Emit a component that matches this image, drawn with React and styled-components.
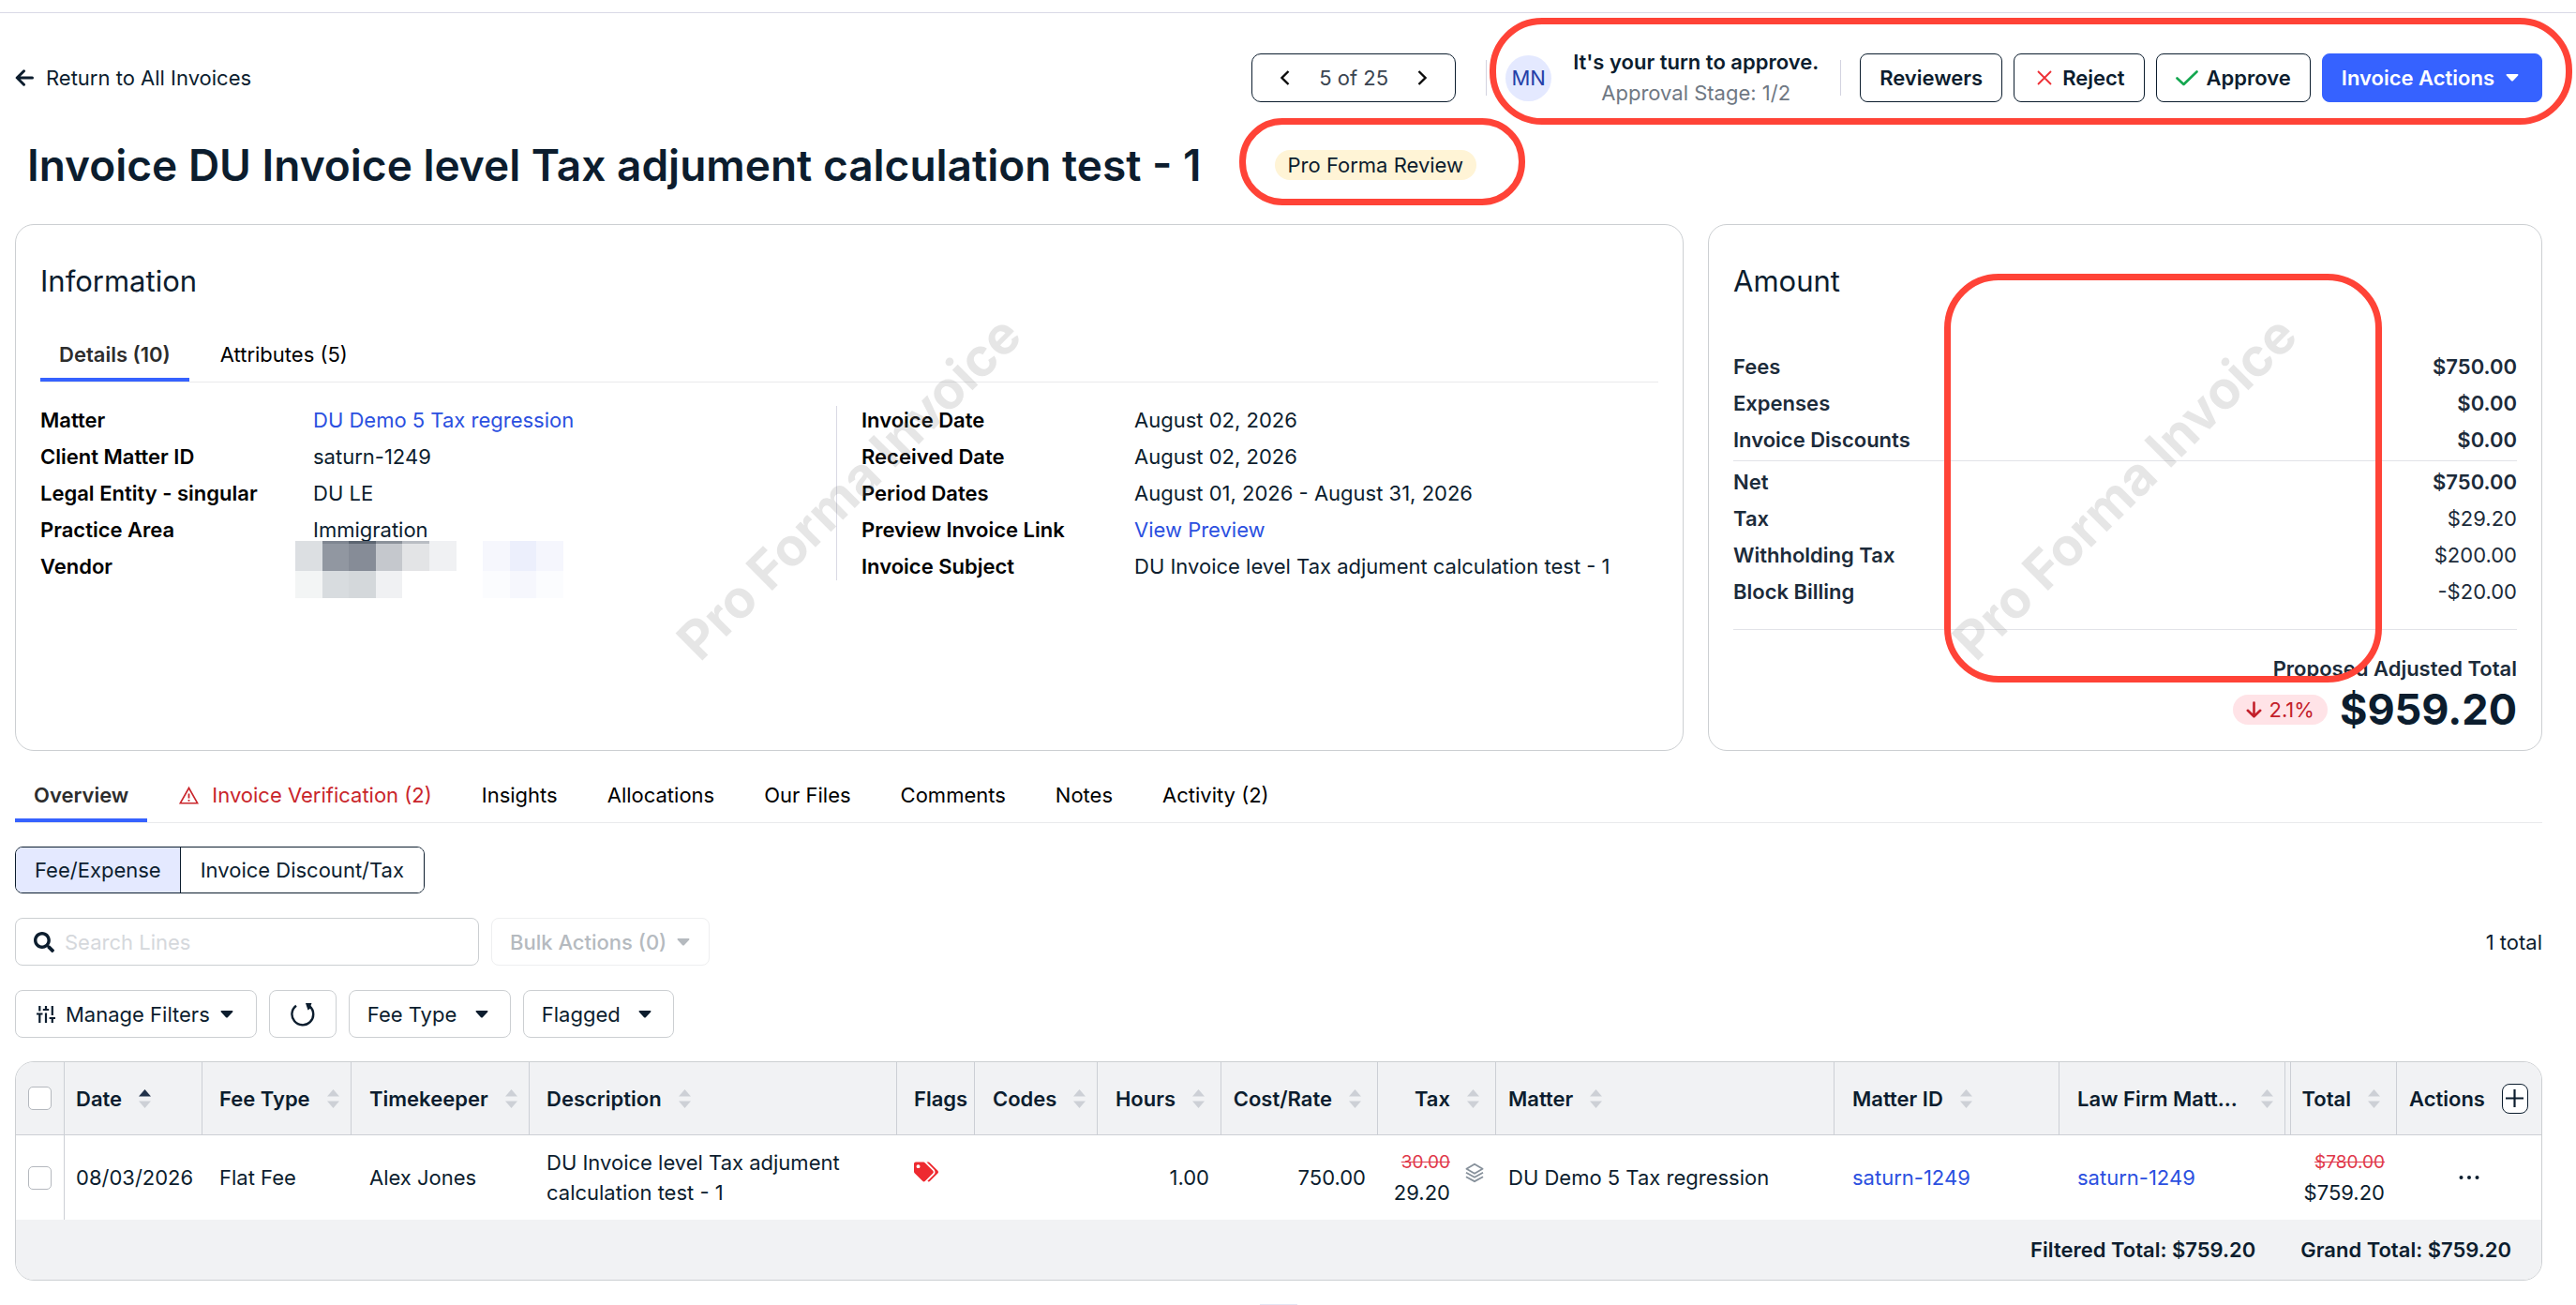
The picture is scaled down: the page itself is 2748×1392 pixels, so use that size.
import React from 'react';
import styled, { createGlobalStyle } from 'styled-components';
import { FaSearch, FaTags } from 'react-icons/fa';

const GlobalStyle = createGlobalStyle`
  *, *::before, *::after {
    box-sizing: border-box;
  }
  body {
    margin: 0;
    background: #fff;
    color: #0c1d2e;
    font-family: Inter, 'Liberation Sans', sans-serif;
    font-size: 22px;
    line-height: 30px;
  }
  button, input, select {
    font: inherit;
    color: inherit;
  }
  a {
    color: #2b50e0;
    text-decoration: none;
  }
  svg {
    display: block;
    flex: none;
  }
`;

const TopStrip = styled('div')`
  height: 14px;
  border-bottom: solid 1px #dadae6;
`;

const Page = styled('main')`
  padding: 0 36px 0 16px;
`;

const Toolbar = styled('header')`
  display: flex;
  justify-content: space-between;
  align-items: center;
  margin-top: 36px;
`;

const ToolbarGroup = styled('div')`
  position: relative;
  display: flex;
  align-items: center;
  gap: ${(props) => props.$gap}px;
`;

const BackLink = styled('a')`
  display: flex;
  align-items: center;
  gap: 13px;
  color: #0c1d2e;
`;

const Pager = styled('nav')`
  display: flex;
  justify-content: space-between;
  align-items: center;
  width: 218px;
  height: 52px;
  padding: 0 24px;
  border: solid 1px #0c1d2e;
  border-radius: 10px;
  color: #3a4450;
`;

const IconButton = styled('button')`
  display: block;
  padding: 6px;
  border: 0;
  background: none;
  cursor: pointer;
`;

const Separator = styled('div')`
  width: 1px;
  height: 38px;
  background: #d3d3e0;
`;

const Avatar = styled('div')`
  display: flex;
  justify-content: center;
  align-items: center;
  width: 49px;
  height: 49px;
  border-radius: 50%;
  background: #e4e9ff;
  color: #2540a8;
`;

const Turn = styled('div')`
  min-width: 268px;
  line-height: 33px;
  text-align: center;
  color: #6f7883;
`;

const Strong = styled('strong')`
  font-weight: 600;
  color: #0c1d2e;
`;

const Button = styled('button')`
  display: flex;
  align-items: center;
  gap: 9px;
  height: 52px;
  padding: 0 20px;
  border: solid 1px ${(props) => (props.$primary ? '#3662ff' : '#0c1d2e')};
  border-radius: 8px;
  background: ${(props) => (props.$primary ? '#3662ff' : '#fff')};
  color: ${(props) => (props.$primary ? '#fff' : '#0c1d2e')};
  font-weight: 600;
  cursor: pointer;

  ${(props) => props.$primary && 'gap: 12px; padding-right: 24px;'}
`;

const Annotation = styled('div')`
  position: absolute;
  inset: ${(props) => props.$inset};
  border: solid 7px #ff4337;
  border-radius: ${(props) => props.$radius}px;
  pointer-events: none;
`;

const TitleRow = styled('div')`
  display: flex;
  align-items: center;
  gap: 78px;
  margin-top: 30px;
  padding-left: 13px;
`;

const Title = styled('h1')`
  margin: 0;
  font-size: 46px;
  font-weight: 600;
  line-height: 60px;
`;

const StatusWrapper = styled('div')`
  position: relative;
`;

const Status = styled('div')`
  height: 32px;
  padding: 0 14px;
  border-radius: 16px;
  background: #fff4d6;
  line-height: 32px;
`;

const CardRow = styled('div')`
  display: grid;
  grid-template-columns: 2fr 1fr;
  gap: 26px;
  margin-top: 33px;
`;

const Card = styled('section')`
  position: relative;
  padding: 40px 26px 17px;
  border: solid 1px #cccfd2;
  border-radius: 20px;
`;

const CardTitle = styled('h2')`
  margin: 0;
  font-size: 31px;
  font-weight: 400;
  line-height: 40px;
`;

const Watermark = styled('div')`
  position: absolute;
  inset: 0;
  display: flex;
  justify-content: center;
  align-items: center;
  color: rgba(128, 128, 128, 0.2);
  font-size: 56px;
  font-weight: 700;
  white-space: nowrap;
  pointer-events: none;

  span {
    transform: rotate(-45deg);
  }
`;

const Tabs = styled('div')`
  display: flex;
  gap: 13px;
  margin-top: ${(props) => props.$top}px;
  border-bottom: solid 1px #e9eaec;
`;

const Tab = styled('button')`
  display: flex;
  align-items: center;
  gap: 14px;
  padding: 10px 20px;
  border: 0;
  border-bottom: solid 4px ${(props) => (props.$active ? '#3662ff' : 'transparent')};
  background: none;
  color: ${(props) =>
    props.$alert ? '#c9252b' : props.$active ? '#2d2d2d' : '#000'};
  font-weight: ${(props) => (props.$active ? 600 : 400)};
  line-height: 30px;
  cursor: pointer;
`;

const FieldColumns = styled('div')`
  display: grid;
  grid-template-columns: 1fr 1fr;
  margin-top: 25px;
`;

const FieldList = styled('dl')`
  display: grid;
  grid-template-columns: 291px 1fr;
  align-content: start;
  row-gap: 9px;
  margin: 0;
  padding-left: ${(props) => (props.$divided ? '26px' : 0)};
  border-left: ${(props) => (props.$divided ? 'solid 1px #d9d9e4' : 0)};
  ${(props) => props.$divided && 'margin-left: -14px;'}

  dt {
    font-weight: 600;
    color: #000;
  }
  dd {
    position: relative;
    margin: 0;
  }
`;

const Redacted = styled('svg')`
  position: absolute;
  top: -12px;
  left: -19px;
`;

const AmountList = styled('dl')`
  display: grid;
  row-gap: 9px;
  margin: 0;
  padding: ${(props) => props.$padding};
  border-bottom: solid 1px #e2e3e8;
`;

const AmountRow = styled('div')`
  display: flex;
  justify-content: space-between;
  color: #1c2b3a;

  dt {
    font-weight: 600;
  }
  dd {
    margin: 0;
    font-weight: ${(props) => (props.$bold ? 600 : 400)};
  }
`;

const TotalLabel = styled('div')`
  margin-top: 26px;
  font-weight: 600;
  color: #1c2b3a;
  text-align: right;
`;

const TotalRow = styled('div')`
  display: flex;
  justify-content: flex-end;
  align-items: center;
  gap: 13px;
  margin-top: 3px;
`;

const Total = styled('div')`
  font-size: 45px;
  font-weight: 700;
  line-height: 52px;
`;

const Delta = styled('div')`
  display: flex;
  align-items: center;
  gap: 8px;
  height: 32px;
  padding: 0 14px;
  border-radius: 16px;
  background: #ffe3e7;
  color: #c3202b;
`;

const Segmented = styled('div')`
  display: flex;
  width: fit-content;
  margin-top: 25px;
  border: solid 1px #0c1d2e;
  border-radius: 8px;
  overflow: hidden;
`;

const Segment = styled('button')`
  height: 48px;
  padding: 0 20px;
  border: 0;
  background: ${(props) => (props.$active ? '#e4e9ff' : '#fff')};
  cursor: pointer;

  & + & {
    padding: 0 21px;
    border-left: solid 1px #0c1d2e;
  }
`;

const FilterRow = styled('div')`
  display: flex;
  align-items: center;
  gap: 13px;
  margin-top: 26px;
`;

const SearchBox = styled('label')`
  display: flex;
  align-items: center;
  gap: 11px;
  width: 495px;
  height: 51px;
  padding: 0 19px;
  border: solid 1px #cccfd2;
  border-radius: 8px;

  input {
    flex: 1;
    min-width: 0;
    padding: 0;
    border: 0;
    outline: 0;
    background: none;
  }
  input::placeholder {
    color: #d5d8dc;
    opacity: 1;
  }
`;

const FilterButton = styled('button')`
  display: flex;
  align-items: center;
  gap: 11px;
  height: 51px;
  padding: 0 24px 0 22px;
  border: solid 1px #cccfd2;
  border-radius: 8px;
  background: #fff;
  cursor: pointer;

  &:disabled {
    padding: 0 20px 0 19px;
    border-color: #eeeff0;
    color: #b5babf;
    font-weight: 500;
    cursor: default;
  }
`;

const ResetButton = styled(FilterButton)`
  padding: 0 22px;
`;

const SelectWrapper = styled('div')`
  position: relative;
  display: flex;

  select {
    appearance: none;
    height: 51px;
    padding: 0 56px 0 19px;
    border: solid 1px #cccfd2;
    border-radius: 8px;
    background: #fff;
  }
  svg {
    position: absolute;
    top: 22px;
    right: 24px;
    pointer-events: none;
  }
`;

const Count = styled('div')`
  margin-left: auto;
`;

const TableWrapper = styled('div')`
  margin-top: 25px;
  border: solid 1px #cccfd2;
  border-radius: 20px;
  overflow: hidden;
`;

const Table = styled('table')`
  width: 100%;
  table-layout: fixed;
  border-collapse: separate;
  border-spacing: 0;
  line-height: 32px;
`;

const HeadCell = styled('th')`
  height: 78px;
  padding: 0 ${(props) => (props.$right ? 17 : 10)}px 0 ${(props) => props.$pad}px;
  border-right: solid 1px #cccfd5;
  border-bottom: solid 1px #cccfd5;
  background: #f1f2f4;
  font-weight: 600;
  text-align: left;
  white-space: nowrap;
  ${(props) =>
    props.$double &&
    'padding-right: 18px; box-shadow: inset -5px 0 #f1f2f4, inset -6px 0 #cccfd5;'}

  &:last-child {
    padding-right: 14px;
    border-right: 0;
  }
`;

const HeadLabel = styled('div')`
  display: flex;
  align-items: center;
  justify-content: ${(props) => props.$justify || 'flex-start'};
  gap: 18px;
`;

const Cell = styled('td')`
  height: 90px;
  padding: 0 ${(props) => (props.$right ? 13 : 0)}px 0 ${(props) => props.$pad}px;
  text-align: ${(props) => (props.$right ? 'right' : 'left')};

  &:first-child {
    border-right: solid 1px #cccfd5;
  }
`;

const Flag = styled('div')`
  padding-bottom: 12px;
`;

const TaxCell = styled('div')`
  display: flex;
  justify-content: flex-end;
  align-items: center;
  gap: 16px;
  height: 64px;

  svg {
    margin-bottom: 10px;
  }
`;

const Old = styled('del')`
  display: block;
  font-size: 19px;
  color: #e0384a;
`;

const Checkbox = styled('input')`
  appearance: none;
  display: block;
  width: 25px;
  height: 25px;
  margin: 0 0 0 13px;
  border: solid 1px #b4b8be;
  border-radius: 5px;
  background: #fff;
`;

const AddColumn = styled('button')`
  display: flex;
  justify-content: center;
  align-items: center;
  width: 32px;
  height: 32px;
  padding: 0;
  border: solid 1px #0c1d2e;
  border-radius: 8px;
  background: #fff;
`;

const TotalsBar = styled('div')`
  display: flex;
  justify-content: flex-end;
  align-items: center;
  gap: 48px;
  height: 64px;
  padding-right: 32px;
  background: #f1f2f4;
  font-weight: 600;
`;

const Handle = styled('div')`
  width: 40px;
  height: 1px;
  margin: 25px auto 0;
  background: #e4e6f4;
`;

const BackIcon = () => (
  <svg width="20" height="18" viewBox="0 0 20 18" fill="none" stroke="currentColor" strokeWidth="3">
    <path d="M9.5 1.800L2.200 9l7.300 7.200M2.500 9h16" strokeLinecap="round" strokeLinejoin="round" />
  </svg>
);

const DownIcon = () => (
  <svg width="17" height="18" viewBox="0 0 17 18" fill="none" stroke="currentColor" strokeWidth="2.600">
    <path d="M8.5 1.500V16M1.800 9.800l6.700 6.500 6.700-6.500" strokeLinecap="round" strokeLinejoin="round" />
  </svg>
);

const Caret = () => (
  <svg width="14" height="8" viewBox="0 0 14 8" fill="currentColor">
    <path d="M1.400 0h11.200c.8 0 1.200.9.6 1.500L7.800 7.200c-.5.500-1.200.500-1.700 0L.8 1.500C.2.9.6 0 1.400 0z" />
  </svg>
);

const Chevron = ({ right }) => (
  <svg width="10" height="16" viewBox="0 0 10 16" fill="none" stroke="#0b0b0b" strokeWidth="2.400">
    <path d={right ? 'M1.500 1l7 7-7 7' : 'M8.500 1l-7 7 7 7'} />
  </svg>
);

const CrossIcon = () => (
  <svg width="22" height="16" viewBox="-4 0 22 16" stroke="#ee2f35" strokeWidth="1.800">
    <path d="M1 1l14 14M15 1L1 15" />
  </svg>
);

const CheckIcon = () => (
  <svg width="24" height="17" viewBox="0 0 24 17" fill="none" stroke="#14a750" strokeWidth="2.600">
    <path d="M1.500 8.500l7 6.500L22.500 1.500" strokeLinecap="round" strokeLinejoin="round" />
  </svg>
);

const AlertIcon = () => (
  <svg width="22" height="20" viewBox="0 0 22 20" fill="none" stroke="currentColor" strokeWidth="1.600">
    <path d="M11.500 2.500L20.700 18.800H2.300z" />
    <path d="M11.500 8.500v5M11.500 15v1.800" strokeWidth="1.800" />
  </svg>
);

const SlidersIcon = () => (
  <svg width="20" height="18" viewBox="0 0 20 18" fill="none" stroke="currentColor" strokeWidth="2.200">
    <path d="M3.300 0v5.500M0 8.500h6.500M3.300 8.500V18" />
    <path d="M10 0v4M6.800 4h6.400M10 7.500V18" />
    <path d="M16.800 0v10M13.600 13H20M16.800 13v5" />
  </svg>
);

const ResetIcon = () => (
  <svg width="26" height="26" viewBox="0 0 26 26" fill="none">
    <path d="M6 3.800A11.400 11.400 0 1 0 20.500 4.500" stroke="currentColor" strokeWidth="2.400" />
    <path d="M16 1h6.500l-1 2.500.5 2.500-3.500 2.500z" fill="currentColor" />
  </svg>
);

const LayersIcon = () => (
  <svg width="20" height="22" viewBox="0 0 21 22" fill="none" stroke="#87919b" strokeWidth="1.900">
    <path d="M10.500 1.200l9 5.300-9 5.300-9-5.300z" strokeLinejoin="round" />
    <path d="M1 10.800l9.500 5.200 9.500-5.200M1 15.400l9.500 5.200 9.500-5.200" />
  </svg>
);

const SortIcon = ({ active }) => (
  <svg width="13" height="20" viewBox="0 0 13 20" fill="#cdd0d6">
    <path d="M6.500 0L13 7.500H0z" fill={active ? '#22324a' : '#cdd0d6'} />
    <path d="M6.500 20L0 12.500h13z" />
  </svg>
);

const PlusIcon = () => (
  <svg width="19" height="19" viewBox="0 0 19 19" stroke="#0c1d2e" strokeWidth="2.200">
    <path d="M9.500 0v19M0 9.500h19" />
  </svg>
);

const DotsIcon = () => (
  <svg width="22" height="6" viewBox="0 0 22 6" fill="#0c1d2e">
    <circle cx="2.500" cy="3" r="2" />
    <circle cx="11" cy="3" r="2" />
    <circle cx="19.500" cy="3" r="2" />
  </svg>
);

const pixels = [
  ['#dcdfe2', '#9197a1', '#868c97', '#c5c8cd', '#e3e4e6', '#f0f1f3', null, '#f6f7fd', '#eceffc', '#f5f6fd'],
  ['#f3f5f5', '#d8dcdf', '#d4d8db', '#f0f1f3', null, null, null, '#fbfcfe', '#f6f7fd', '#fbfcfe'],
];

const RedactedName = () => (
  <Redacted width="287" height="61" viewBox="0 0 287 61" aria-label="Hidden vendor">
    {pixels.map((line, row) =>
      line.map((fill, i) => {
        const x = Math.round(i * 28.6);
        const width = Math.round((i + 1) * 28.6) - x;
        return (
          fill && (
            <rect key={i} x={x} y={row * 32} width={width} height={row ? 29 : 32} fill={fill} />
          )
        );
      })
    )}
    <path d="M29 0h28v3H29z" fill="#7f8691" />
    <path d="M57 0h29v3H57z" fill="#5c6571" />
    <path d="M86 0h28v3H86z" fill="#8c929b" />
    <path d="M114 0h29v3h-29z" fill="#b9bdc3" />
  </Redacted>
);

const leftFields = [
  ['Matter', <a href="#matter">DU Demo 5 Tax regression</a>],
  ['Client Matter ID', 'saturn-1249'],
  ['Legal Entity - singular', 'DU LE'],
  ['Practice Area', 'Immigration'],
  ['Vendor', <RedactedName />],
];

const rightFields = [
  ['Invoice Date', 'August 02, 2026'],
  ['Received Date', 'August 02, 2026'],
  ['Period Dates', 'August 01, 2026 - August 31, 2026'],
  ['Preview Invoice Link', <a href="#preview">View Preview</a>],
  ['Invoice Subject', 'DU Invoice level Tax adjument calculation test - 1'],
];

const grossAmounts = [
  ['Fees', '$750.00', true],
  ['Expenses', '$0.00', true],
  ['Invoice Discounts', '$0.00', true],
];

const netAmounts = [
  ['Net', '$750.00', true],
  ['Tax', '$29.20'],
  ['Withholding Tax', '$200.00'],
  ['Block Billing', '-$20.00'],
];

const pageTabs = [
  'Insights',
  'Allocations',
  'Our Files',
  'Comments',
  'Notes',
  'Activity (2)',
];

// matter takes whatever width the other columns leave
const columns = [
  { label: 'Date', width: 147, pad: 12, active: true },
  { label: 'Fee Type', width: 159, pad: 18 },
  { label: 'Timekeeper', width: 190, pad: 19 },
  { label: 'Description', width: 392, pad: 18 },
  { label: 'Flags', width: 83, pad: 18, plain: true },
  { label: 'Codes', width: 131, pad: 19 },
  { label: 'Hours', width: 132, pad: 12, right: true, justify: 'flex-end' },
  { label: 'Cost/Rate', width: 167, pad: 12, right: true, justify: 'flex-end' },
  { label: 'Tax', width: 126, pad: 12, right: true, justify: 'flex-end' },
  { label: 'Matter', pad: 13 },
  { label: 'Matter ID', width: 240, pad: 19 },
  { label: 'Law Firm Matt...', width: 247, pad: 19, double: true, justify: 'space-between' },
  { label: 'Total', width: 113, pad: 12, right: true, justify: 'flex-end' },
];

const Fields = ({ items, divided }) => (
  <FieldList $divided={divided}>
    {items.map(([label, value]) => (
      <React.Fragment key={label}>
        <dt>{label}</dt>
        <dd>{value}</dd>
      </React.Fragment>
    ))}
  </FieldList>
);

const Amounts = ({ items, padding }) => (
  <AmountList $padding={padding}>
    {items.map(([label, value, bold]) => (
      <AmountRow key={label} $bold={bold}>
        <dt>{label}</dt>
        <dd>{value}</dd>
      </AmountRow>
    ))}
  </AmountList>
);

const InvoiceHeader = () => (
  <>
    <Toolbar>
      <BackLink href="#invoices">
        <BackIcon />
        Return to All Invoices
      </BackLink>
      <ToolbarGroup $gap={32}>
        <Pager aria-label="Invoices">
          <IconButton aria-label="Previous">
            <Chevron />
          </IconButton>
          5 of 25
          <IconButton aria-label="Next">
            <Chevron right />
          </IconButton>
        </Pager>
        <ToolbarGroup $gap={20}>
          <Separator />
          <ToolbarGroup $gap={20}>
            <Avatar>MN</Avatar>
            <Turn>
              <Strong>It's your turn to approve.</Strong>
              <br />
              Approval Stage: 1/2
            </Turn>
            <Separator />
            <ToolbarGroup $gap={12}>
              <Button>Reviewers</Button>
              <Button>
                <CrossIcon />
                Reject
              </Button>
              <Button>
                <CheckIcon />
                Approve
              </Button>
              <Button $primary>
                Invoice Actions
                <Caret />
              </Button>
            </ToolbarGroup>
            <Annotation $inset="-31px -32px -17px -17px" $radius={56} />
          </ToolbarGroup>
        </ToolbarGroup>
      </ToolbarGroup>
    </Toolbar>
    <TitleRow>
      <Title>Invoice DU Invoice level Tax adjument calculation test - 1</Title>
      <StatusWrapper>
        <Status>Pro Forma Review</Status>
        <Annotation $inset="-34px -52px -27px -38px" $radius={46} />
      </StatusWrapper>
    </TitleRow>
  </>
);

const Lines = () => (
  <TableWrapper>
    <Table>
      <colgroup>
        <col width="52" />
        {columns.map((c) => (
          <col key={c.label} width={c.width} />
        ))}
        <col width="154" />
      </colgroup>
      <thead>
        <tr>
          <HeadCell $pad={0}>
            <Checkbox type="checkbox" aria-label="Select all lines" />
          </HeadCell>
          {columns.map((c) => (
            <HeadCell key={c.label} $pad={c.pad} $right={c.right} $double={c.double}>
              <HeadLabel $justify={c.justify}>
                {c.label}
                {!c.plain && <SortIcon active={c.active} />}
              </HeadLabel>
            </HeadCell>
          ))}
          <HeadCell $pad={13}>
            <HeadLabel $justify="space-between">
              Actions
              <AddColumn aria-label="Add column">
                <PlusIcon />
              </AddColumn>
            </HeadLabel>
          </HeadCell>
        </tr>
      </thead>
      <tbody>
        <tr>
          <Cell $pad={0}>
            <Checkbox type="checkbox" aria-label="Select line" />
          </Cell>
          <Cell $pad={12}>08/03/2026</Cell>
          <Cell $pad={18}>Flat Fee</Cell>
          <Cell $pad={19}>Alex Jones</Cell>
          <Cell $pad={18}>
            DU Invoice level Tax adjument
            <br />
            calculation test - 1
          </Cell>
          <Cell $pad={18}>
            <Flag>
              <FaTags size={26} color="#ee2a30" />
            </Flag>
          </Cell>
          <Cell $pad={19} />
          <Cell $pad={0} $right>
            1.00
          </Cell>
          <Cell $pad={0} $right>
            750.00
          </Cell>
          <Cell $pad={0} $right>
            <TaxCell>
              <div>
                <Old>30.00</Old>
                29.20
              </div>
              <LayersIcon />
            </TaxCell>
          </Cell>
          <Cell $pad={13}>DU Demo 5 Tax regression</Cell>
          <Cell $pad={19}>
            <a href="#matter">saturn-1249</a>
          </Cell>
          <Cell $pad={19}>
            <a href="#matter">saturn-1249</a>
          </Cell>
          <Cell $pad={0} $right>
            <Old>$780.00</Old>
            $759.20
          </Cell>
          <Cell $pad={60}>
            <IconButton aria-label="Line actions">
              <DotsIcon />
            </IconButton>
          </Cell>
        </tr>
      </tbody>
    </Table>
    <TotalsBar>
      <span>Filtered Total: $759.20</span>
      <span>Grand Total: $759.20</span>
    </TotalsBar>
  </TableWrapper>
);

const App = () => (
  <>
    <GlobalStyle />
    <TopStrip />
    <Page>
      <InvoiceHeader />
      <CardRow>
        <Card>
          <CardTitle>Information</CardTitle>
          <Tabs $top={33}>
            <Tab $active>Details (10)</Tab>
            <Tab>Attributes (5)</Tab>
          </Tabs>
          <FieldColumns>
            <Fields items={leftFields} />
            <Fields items={rightFields} divided />
          </FieldColumns>
          <Watermark>
            <span>Pro Forma Invoice</span>
          </Watermark>
        </Card>
        <Card>
          <CardTitle>Amount</CardTitle>
          <Amounts items={grossAmounts} padding="56px 0 7px" />
          <Amounts items={netAmounts} padding="7px 0 25px" />
          <TotalLabel>Proposed Adjusted Total</TotalLabel>
          <TotalRow>
            <Delta>
              <DownIcon />
              2.1%
            </Delta>
            <Total>$959.20</Total>
          </TotalRow>
          <Watermark>
            <span>Pro Forma Invoice</span>
          </Watermark>
          <Annotation $inset="52px 170px 72px 251px" $radius={58} />
        </Card>
      </CardRow>
      <Tabs $top={22}>
        <Tab $active>Overview</Tab>
        <Tab $alert>
          <AlertIcon />
          Invoice Verification (2)
        </Tab>
        {pageTabs.map((tab) => (
          <Tab key={tab}>{tab}</Tab>
        ))}
      </Tabs>
      <Segmented>
        <Segment $active>Fee/Expense</Segment>
        <Segment>Invoice Discount/Tax</Segment>
      </Segmented>
      <FilterRow>
        <SearchBox>
          <FaSearch size={22} />
          <input type="search" placeholder="Search Lines" aria-label="Search Lines" />
        </SearchBox>
        <FilterButton disabled>
          Bulk Actions (0)
          <Caret />
        </FilterButton>
        <Count>1 total</Count>
      </FilterRow>
      <FilterRow>
        <FilterButton>
          <SlidersIcon />
          Manage Filters
          <Caret />
        </FilterButton>
        <ResetButton aria-label="Reset filters">
          <ResetIcon />
        </ResetButton>
        <SelectWrapper>
          <select aria-label="Fee Type">
            <option>Fee Type</option>
          </select>
          <Caret />
        </SelectWrapper>
        <SelectWrapper>
          <select aria-label="Flagged">
            <option>Flagged</option>
          </select>
          <Caret />
        </SelectWrapper>
      </FilterRow>
      <Lines />
      <Handle />
    </Page>
  </>
);

export default App;
